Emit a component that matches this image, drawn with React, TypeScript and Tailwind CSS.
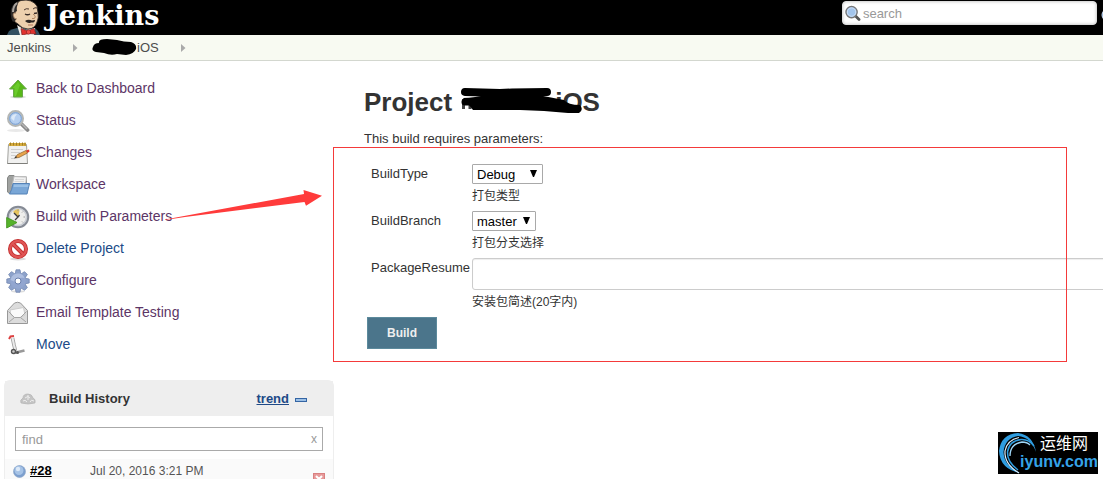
import type { ReactNode } from 'react';

function ButlerLogo() {
  return (
    <svg width="33" height="35" viewBox="0 0 33 35" aria-hidden="true">
      <path d="M0 35 L2 31 Q5 29 10 28 L28 28 Q32 31 33 35Z" fill="#335061" />
      <path d="M10 25 L18 30 L28 28 L27 35 H13Z" fill="#f0eeea" />
      <path d="M8 22 L5 15 Q4 3 14 .5 Q25 -1.500 30 6 L31 13 Q32 18 30 22 Q28 29 21 29 Q15 29 11 24Z" fill="#edd0ae" stroke="#2a2321" strokeWidth=".8" />
      <path d="M4.500 19 Q2 8 7 4 L12 1.500 Q9 7 10 11 L8.500 12 L9 20 L6 22Z" fill="#2d2a29" />
      <path d="M10 3 Q6 6 6 12" stroke="#a8a29c" strokeWidth="2" fill="none" />
      <path d="M9 13 Q6 12 6 15 Q7 20 10 19" fill="#edd0ae" stroke="#8d6b50" strokeWidth=".8" />
      <path d="M17 10 Q19 8 22 9 M26 9 Q28 7 30 8" stroke="#4a3830" fill="none" />
      <path d="M18 14 Q20.500 15.500 23 14 M27 13.500 L30 13" stroke="#3a2d28" strokeWidth="1.300" fill="none" />
      <path d="M26 14 Q30 17 27 18.500 L25 18.500" fill="none" stroke="#b48660" />
      <path d="M18 21 Q21 19 25 20.500 L28 20 Q28 23 24 22.500 Q21 24 18 21Z" fill="#2b2422" />
      <path d="M21 25 H26" stroke="#b2775c" />
      <path d="M14 28.500 L20.500 31 L27 28.500 L29 34 L22 33.500 L15 35Z" fill="#e0322e" stroke="#811c1c" strokeWidth=".7" />
      <circle cx="21.500" cy="32" r="2.200" fill="#f04c45" stroke="#811c1c" strokeWidth=".6" />
    </svg>
  );
}

function Glyph({ children, className = '' }: { children: ReactNode; className?: string }) {
  return (
    <svg width="24" height="24" viewBox="0 0 24 24" className={`shrink-0 ${className}`} aria-hidden="true">
      {children}
    </svg>
  );
}

function Magnifier({ className = '' }: { className?: string }) {
  return (
    <Glyph className={className}>
      <ellipse cx="10" cy="21.5" rx="9" ry="1.5" fill="#e9e9e9" />
      <path d="M15.500 15 L21.500 21" stroke="#888" strokeWidth="3.800" strokeLinecap="round" />
      <path d="M16 15 L21 20" stroke="#b5b5b5" strokeWidth="1.500" />
      <circle cx="9.500" cy="9.500" r="7.500" fill="#a9c8ee" stroke="#b4b6b4" strokeWidth="2" />
      <circle cx="9.500" cy="9.500" r="5.800" fill="#b5cff0" stroke="#6d94c8" strokeWidth=".8" />
      <path d="M5 9 Q6 5 11 5 Q8 8 8 12Z" fill="#dce9f8" />
    </Glyph>
  );
}

const gearTeeth = [0, 45, 90, 135, 180, 225, 270, 315];

const tasks: { label: string; fresh?: boolean; icon: ReactNode }[] = [
  {
    label: 'Back to Dashboard',
    icon: (
      <Glyph>
        <ellipse cx="12" cy="20" rx="8" ry="1.500" fill="#e0e0e0" />
        <path d="M12 3 L20.500 12 H16.500 V20 H7.500 V12 H3.500Z" fill="#58b818" stroke="#69a84a" />
        <path d="M12 5 L14 8 L10 19 H8.500 V11 H6.500Z" fill="#6acb2b" />
      </Glyph>
    ),
  },
  { label: 'Status', icon: <Magnifier /> },
  {
    label: 'Changes',
    icon: (
      <Glyph>
        <path d="M2.500 3.500 H20.500 L21.500 22.500 H1.500Z" fill="#f1f1f0" stroke="#a2a29e" />
        <path d="M1.500 22.500 H21.500" stroke="#7e7e7a" />
        <path d="M3 2 H20 V5 H3Z" fill="#d5ab3e" />
        <path d="M4.500 1.500 V4.500 M7.500 1.500 V4.500 M10.500 1.500 V4.500 M13.500 1.500 V4.500 M16.500 1.500 V4.500 M19 1.500 V4.500" stroke="#a17f25" />
        <path d="M5 8.500 H17 M5 11.500 H14 M5 14.500 H11 M5 17.500 H9" stroke="#cfcfcf" />
        <path d="M9 17 L11.500 13.500 L20 9.500 L21.500 12 L13 16.500Z" fill="#e8a44c" stroke="#8a6230" strokeWidth=".7" />
        <path d="M20 9.500 L23 8.500 L23.500 10.500 L21.500 12Z" fill="#dd3b2e" />
        <path d="M8 17.500 L11 16.500 L10 15Z" fill="#333" />
      </Glyph>
    ),
  },
  {
    label: 'Workspace',
    icon: (
      <Glyph>
        <path d="M1.500 5 L3 2.500 H8 L9 4 H20.500 V20.500 H3.500 L1.500 19Z" fill="#a0a2a0" stroke="#858785" />
        <path d="M8 3.500 L20.500 4 L19.500 13 H6Z" fill="#f0f0f0" stroke="#b8b8b8" />
        <path d="M9 6.500 H18 M8.500 8.500 H18" stroke="#d8d8d8" />
        <path d="M7 10.500 H23.500 L21 21 H3.500 Q6 17 7 10.500Z" fill="#79a6d6" stroke="#5583b8" />
        <path d="M8 11.500 H22.500 L22 14 H7.500Z" fill="#9ac0e6" />
      </Glyph>
    ),
  },
  {
    label: 'Build with Parameters',
    icon: (
      <Glyph>
        <circle cx="12" cy="12" r="10" fill="#eeeeec" stroke="#868b95" strokeWidth="2.500" />
        <circle cx="12" cy="12" r="8.500" fill="none" stroke="#c8ccd3" strokeWidth="1.500" />
        <path d="M12 12 L7 7 Q9 4 13 4 L13.500 6Z" fill="#e5c45c" />
        <path d="M12 12 L8 8 M12 12 L9 15 M12 12 L13.500 10" stroke="#3b3b3b" strokeWidth="1.300" />
        <path d="M12 4.500 V6 M19 12 H17.500 M17 6.500 L16 7.500 M17 17.500 L16 16.500" stroke="#999" />
        <path d="M.7 12.500 L11 17.500 L.7 23Z" fill="#55b32b" stroke="#4a9928" />
      </Glyph>
    ),
  },
  {
    label: 'Delete Project',
    fresh: true,
    icon: (
      <Glyph>
        <ellipse cx="12" cy="22" rx="8" ry="1.500" fill="#ddd" />
        <circle cx="12" cy="12" r="8" fill="#fff" stroke="#c02a2a" strokeWidth="4" />
        <path d="M6.500 6.500 L17.500 17.500" stroke="#c02a2a" strokeWidth="4" />
        <circle cx="12" cy="12" r="8" fill="none" stroke="#e05555" strokeWidth="2.400" />
        <path d="M6.500 6.500 L17.500 17.500" stroke="#e05555" strokeWidth="2.400" />
      </Glyph>
    ),
  },
  {
    label: 'Configure',
    icon: (
      <Glyph>
        <ellipse cx="12" cy="22.500" rx="7" ry="1.200" fill="#ddd" />
        {gearTeeth.map((a) => (
          <path key={a} d="M10 .8 H14 L15 6 H9Z" transform={`rotate(${a} 12 12)`} fill="#8da2ca" stroke="#7388b2" strokeWidth=".8" />
        ))}
        <circle cx="12" cy="12" r="7.800" fill="#92a6d0" />
        <path d="M4.500 11 Q6 4.500 12 4.500 Q17 4.500 18.500 9 Q12 8 9 13Z" fill="#aebedf" />
        <circle cx="12" cy="12" r="3" fill="#fff" stroke="#6a7fac" />
      </Glyph>
    ),
  },
  {
    label: 'Email Template Testing',
    icon: (
      <Glyph>
        <path d="M1.500 9.500 L8.500 2 Q11.500 .5 14.500 2 L21.500 9.500 V22.500 H1.500Z" fill="#dcdcdc" stroke="#989898" />
        <path d="M4 9 L17.500 6.500 L19 14 L14 16.500 H8.500 L5 14Z" fill="#fafafa" stroke="#cbcbcb" />
        <path d="M2.500 10.500 L8.500 16.500 H14.500 L20.500 10.500 M3 21 L8.500 16.500 M20 21 L14.500 16.500" fill="none" stroke="#a5a5a5" />
      </Glyph>
    ),
  },
  {
    label: 'Move',
    fresh: true,
    icon: (
      <Glyph>
        <path d="M3 6 L4.500 3.500 L8 3" fill="none" stroke="#dc4040" strokeWidth="2" />
        <path d="M6.500 5 L8 12 L9.500 18" stroke="#a0a0a0" strokeWidth="3.600" fill="none" />
        <path d="M6.500 5 L8 12 L9.500 18" stroke="#ececec" strokeWidth="2" fill="none" />
        <path d="M8 20 L18.500 17.500" stroke="#999" strokeWidth="2.500" />
        <circle cx="7.500" cy="18.500" r="2" fill="#ccc" stroke="#555" strokeWidth="1.400" />
        <circle cx="11.500" cy="19.500" r="1.500" fill="#555" />
      </Glyph>
    ),
  },
];

function Crumb() {
  return (
    <svg width="5" height="8" viewBox="0 0 5 8" aria-hidden="true">
      <path d="M0 0 L4.500 4 L0 8Z" fill="#aaa" />
    </svg>
  );
}

function Choice({ id, value, size }: { id: string; value: string; size: string }) {
  return (
    <div className={`relative ${size}`}>
      <select id={id} className="block h-5 w-full appearance-none rounded-[1px] border border-[#a9a9a9] bg-white pt-px pl-1 text-[13px] leading-4 text-black">
        <option>{value}</option>
      </select>
      <svg className="pointer-events-none absolute top-1.5 right-1.5" width="7" height="7" viewBox="0 0 7 7" aria-hidden="true">
        <path d="M0 0 H7 L4 7 H3Z" fill="#000" />
      </svg>
    </div>
  );
}

function Header() {
  return (
    <header className="flex h-[35px] items-start justify-between bg-black">
      <a href="#" className="flex pl-[7px]">
        <ButlerLogo />
        <span className="ml-1.5 font-['DejaVu_Serif',serif] text-[27px] leading-8 font-bold text-white">Jenkins</span>
      </a>
      <div className="flex items-center">
        <label className="mt-px mr-1 flex h-6 w-[255px] items-center rounded-sm border border-[#ddd] bg-white pl-0.5 shadow-[inset_0_0_3px_#ccc]">
          <svg width="17" height="17" viewBox="0 0 17 17" aria-hidden="true">
            <path d="M11 11 L15 15" stroke="#555" strokeWidth="3" strokeLinecap="round" />
            <circle cx="7" cy="7" r="6" fill="#9fc1ea" stroke="#777" strokeWidth="1.500" />
            <circle cx="7" cy="7" r="4.500" fill="#a3c5ec" stroke="#cfe0f5" />
          </svg>
          <input aria-label="search" placeholder="search" className="w-full min-w-0 bg-transparent pt-px pl-0.5 text-[13px] outline-none placeholder:text-[#999]" />
        </label>
        <svg className="mt-1" width="2" height="12" viewBox="0 0 2 12" aria-hidden="true">
          <circle cx="7" cy="6" r="6" fill="#6b9bd4" stroke="#cfe0f5" />
        </svg>
      </div>
    </header>
  );
}

function Sidebar() {
  return (
    <aside className="w-[334px] shrink-0 pt-[11px]">
      <nav className="relative">
        <ul>
          {tasks.map((t) => (
            <li key={t.label} className="flex h-8 items-start pl-1.5">
              <span className="mt-[5px]">{t.icon}</span>
              <a href="#" className={`ml-1.5 text-sm leading-8 ${t.fresh ? 'text-[#204a87]' : 'text-[#5c3566]'}`}>
                {t.label}
              </a>
            </li>
          ))}
        </ul>
        <svg className="pointer-events-none absolute top-[116px] left-[165px] z-10" width="158" height="34" viewBox="0 0 158 34" aria-hidden="true">
          <path d="M0 31.500 L139 6 L138.500 2 L157 7.800 L141 17.800 L139.500 14 L20 29 L0 32Z" fill="#ff3b3b" />
        </svg>
      </nav>

      <section className="mt-5 ml-1 rounded-t-md border border-[#eee]">
        <div className="flex h-[35px] items-center bg-[#eee] pr-[26px] pl-[15px]">
          <svg width="16" height="12" viewBox="0 0 16 12" aria-hidden="true">
            <path d="M1 10 Q-.5 7 3 5 Q3 1 8 1 Q12 1 13 5 Q16 6 15 10 Q8 12 1 10Z" fill="#c4c4c4" stroke="#b4b4b4" strokeWidth=".7" />
            <path d="M5 5 Q8 2 10 5 M8 2 V7 M3 8 Q5 6 7 9 M10 9 Q11 6 14 8" stroke="#eee" fill="none" />
          </svg>
          <h2 className="ml-[13px] text-[13px] font-bold">Build History</h2>
          <a href="#" className="ml-auto text-[13px] font-bold text-[#204a87] underline">trend</a>
          <button aria-label="Collapse" className="mt-0.5 ml-1.5 h-1 w-3 border border-[#3465a4] bg-[#9cc0e6]" />
        </div>
        <div className="relative mx-[10px] mt-[11px] mb-2">
          <input aria-label="find" placeholder="find" className="block h-6 w-full border border-[#aaa] px-1.5 text-[13px] outline-none placeholder:text-[#999]" />
          <button aria-label="Clear" className="absolute top-0.5 right-1.5 text-xs leading-5 text-[#999]">x</button>
        </div>
        <div className="flex h-9 items-start bg-[#fafafa] pl-2">
          <svg className="mt-1.5" width="13" height="13" viewBox="0 0 13 13" aria-hidden="true">
            <circle cx="6.500" cy="6.500" r="6" fill="#7c9fce" stroke="#8ea8ca" strokeWidth=".7" />
            <circle cx="6" cy="5.500" r="4.500" fill="#a6c3e6" />
            <circle cx="5" cy="4" r="2.200" fill="#dce9f8" />
          </svg>
          <a href="#" className="ml-1 w-[60px] text-[13px] leading-6 font-bold text-black underline">#28</a>
          <span className="text-xs leading-6 text-[#555]">Jul 20, 2016 3:21 PM</span>
          <button aria-label="Cancel" className="mt-3.5 mr-2 ml-auto">
            <svg width="12" height="12" viewBox="0 0 12 12" aria-hidden="true">
              <rect x=".5" y=".5" width="11" height="11" fill="#e79a9a" stroke="#d98080" />
              <path d="M3 3 L9 9 M9 3 L3 9" stroke="#fff" strokeWidth="2" />
            </svg>
          </button>
        </div>
      </section>
    </aside>
  );
}

function Main() {
  return (
    <main className="relative min-w-0 flex-1 overflow-hidden pt-[25px] pl-[30px]">
      <h1 className="flex text-[26px] leading-8 font-bold">
        Project
        <span className="relative ml-2 w-[95px]">
          <svg className="absolute top-px left-0" width="124" height="30" viewBox="0 0 124 30" aria-hidden="true">
            <path d="M3.500 12 V22 M10 12 V22" stroke="#444" strokeWidth="3" />
            <path d="M5 5 L40 6 L52 5.500 L87 5" stroke="#000" strokeWidth="8" strokeLinecap="round" fill="none" />
            <path d="M5 15 L18 15" stroke="#000" strokeWidth="7" strokeLinecap="round" />
            <path d="M3 11 Q14 11 30 7 L78 8 L104 13 Q108 18 120 18 Q124 23 119 26 L108 26 L84 24 L60 23 L13 23 L9 18Z" fill="#000" />
          </svg>
        </span>
        iOS
      </h1>
      <p className="mt-[11px] text-[13px] leading-5">This build requires parameters:</p>
      <form className="mt-[15px]" onSubmit={(e) => e.preventDefault()}>
        <div className="grid grid-cols-[101px_1fr] gap-y-[3px] pl-[7px] text-[13px]">
          <label htmlFor="build-type" className="leading-5">BuildType</label>
          <div>
            <Choice id="build-type" value="Debug" size="w-[71px]" />
            <p className="text-xs leading-6">打包类型</p>
          </div>
          <label htmlFor="build-branch" className="leading-5">BuildBranch</label>
          <div>
            <Choice id="build-branch" value="master" size="w-16" />
            <p className="text-xs leading-6">打包分支选择</p>
          </div>
          <label htmlFor="package-resume" className="leading-5">PackageResume</label>
          <div className="-mr-2">
            <input id="package-resume" className="block h-8 w-full rounded-[3px] border border-[#ccc] px-2 shadow-[inset_0_1px_1px_#eee]" />
            <p className="text-xs leading-6">安装包简述(20字内)</p>
          </div>
        </div>
        <button className="mt-[3px] ml-[3px] h-8 w-[70px] border border-[#5c8a9c] bg-[#4b758b] text-xs font-bold text-[#eee]">Build</button>
      </form>
    </main>
  );
}

function Watermark() {
  return (
    <div className="fixed right-[5px] bottom-[5px] z-20 h-[42px] w-[100px] bg-black font-bold">
      <svg className="absolute top-0 left-0" width="42" height="42" viewBox="0 0 42 42" aria-hidden="true">
        <path d="M38 20 Q35 3 20 1 Q3 2 1 19 Q2 37 22 41 Q6 34 5.500 20 Q7 6 20 4 Q33 5 38 20Z" fill="#2f9de0" />
        <path d="M21 41 Q6 32 7 19 Q9 8 21 5.500" stroke="#d8efff" strokeWidth="1.200" fill="none" />
        <path d="M20 38 Q9 30 9.500 20 Q11 9 23 7.500 Q31 7 36 14" stroke="#2f9de0" strokeWidth="1.500" fill="none" />
        <path d="M12 24 Q12 12 24 10 Q29 10 32 13" stroke="#9fd6f7" strokeWidth="1.300" fill="none" />
      </svg>
      <div className="relative flex flex-col items-end pt-0.5">
        <span className="pr-2.5 text-[16px] leading-5 font-normal text-white">运维网</span>
        <span className="text-[16px] leading-4 text-[#35a3e8]">iyunv.com</span>
      </div>
    </div>
  );
}

export default function App() {
  return (
    <div className="h-screen overflow-hidden bg-white font-['Liberation_Sans','Noto_Sans_CJK_SC',sans-serif] text-[#333]">
      <Header />
      <nav aria-label="Breadcrumb" className="flex h-[26px] items-center border-b border-[#d3d7cf] bg-[#f8faf2] pt-px pl-[7px] text-[13px] text-[#4d4d4d]">
        <a href="#">Jenkins</a>
        <span className="mx-[22px]"><Crumb /></span>
        <a href="#" aria-label="iOS project" className="relative -ml-2 flex">
          <svg width="46" height="18" viewBox="0 0 46 18" aria-hidden="true">
            <path d="M1 9 Q2 5 7 5 Q6 1 15 1 L25 2 Q32 4 39 4 Q45 6 44 11 Q42 16 34 17 L25 16 Q19 18 12 15 L4 14 Q-1 13 1 9Z" fill="#000" />
          </svg>
          <span className="-ml-px">iOS</span>
        </a>
        <span className="mx-[22px]"><Crumb /></span>
      </nav>
      <div className="relative flex">
        <Sidebar />
        <Main />
        <div className="pointer-events-none absolute top-[86px] right-9 left-[333px] h-[215px] border border-[#f43a3a]" />
      </div>
      <Watermark />
    </div>
  );
}
